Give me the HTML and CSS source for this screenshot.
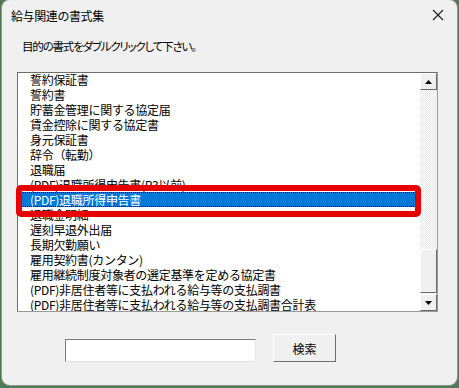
FILE: index.html
```html
<!DOCTYPE html>
<html lang="ja">
<head>
    <meta charset="UTF-8">
    <meta name="viewport" content="width=device-width, initial-scale=1.0">
    <title>給与関連の書式集</title>
    <link rel="stylesheet" href="styles.css">
</head>
<body>
    <div class="window">
        <div class="titlebar">
            <span class="title">給与関連の書式集</span>
            <span class="close">
                <svg width="12" height="12" viewBox="0 0 12 12">
                    <path d="M1 1 L11 11 M11 1 L1 11" stroke="#1a1a1a" stroke-width="1.1" fill="none"/>
                </svg>
            </span>
        </div>

        <p class="prompt">目的の書式をダブルクリックして下さい。</p>

        <div class="listbox">
            <ul class="items">
                <li>誓約保証書</li>
                <li>誓約書</li>
                <li>貯蓄金管理に関する協定届</li>
                <li>賃金控除に関する協定書</li>
                <li>身元保証書</li>
                <li>辞令（転勤）</li>
                <li>退職届</li>
                <li>(PDF)退職所得申告書(R3以前)</li>
                <li class="selected"><span>(PDF)退職所得申告書</span></li>
                <li>退職金明細</li>
                <li>遅刻早退外出届</li>
                <li>長期欠勤願い</li>
                <li>雇用契約書(カンタン)</li>
                <li>雇用継続制度対象者の選定基準を定める協定書</li>
                <li>(PDF)非居住者等に支払われる給与等の支払調書</li>
                <li>(PDF)非居住者等に支払われる給与等の支払調書合計表</li>
            </ul>
            <div class="scrollbar">
                <div class="sb-btn">
                    <svg width="7" height="4" viewBox="0 0 7 4"><path d="M0 4 L3.5 0 L7 4 Z" fill="#000"/></svg>
                </div>
                <div class="sb-track"></div>
                <div class="sb-thumb"></div>
                <div class="sb-track end"></div>
                <div class="sb-btn">
                    <svg width="7" height="4" viewBox="0 0 7 4"><path d="M0 0 L7 0 L3.5 4 Z" fill="#000"/></svg>
                </div>
            </div>
            <div class="callout"></div>
        </div>

        <div class="search-row">
            <input type="text" class="search-box">
            <button class="search-btn">検索</button>
        </div>
    </div>
</body>
</html>
```

FILE: styles.css
```css
* {
    margin: 0;
    padding: 0;
    box-sizing: border-box;
}

body {
    background: #4f7a55;
    font-family: "Noto Sans CJK JP", "Noto Sans", sans-serif;
    height: 388px;
    overflow: hidden;
}

.window {
    margin-left: 2px;
    width: 455px;
    height: 385px;
    background: #f0f0f0;
    border-radius: 8px;
    box-shadow: 0 0 0 1px #8a9a8c;
    display: flex;
    flex-direction: column;
}

.titlebar {
    height: 30px;
    display: flex;
    align-items: center;
    justify-content: space-between;
    padding: 0 12px 0 9px;
    font-size: 12px;
    color: #000;
}

.title {
    letter-spacing: -0.4px;
}

.close {
    display: flex;
    width: 14px;
    justify-content: center;
}

.prompt {
    margin: 8px 0 0 20px;
    font-size: 11.5px;
    line-height: 16px;
    letter-spacing: -1.2px;
    font-feature-settings: "palt";
    color: #000;
}

.listbox {
    position: relative;
    margin: 18px 0 0 15px;
    width: 421px;
    height: 240px;
    background: #fff;
    border: 1px solid #9a9a9a;
    border-top-color: #6e6e6e;
    border-left-color: #6e6e6e;
    display: flex;
}

.items {
    list-style: none;
    flex: 1;
    overflow: hidden;
    margin-top: -1px;
}

.items li {
    height: 15px;
    line-height: 15px;
    font-size: 12px;
    letter-spacing: -0.3px;
    padding-left: 12px;
    white-space: nowrap;
    color: #000;
}

.items li.selected {
    background: #0078d7;
    color: #fff;
    outline: 1px dotted #000;
    outline-offset: -1px;
}

.scrollbar {
    width: 17px;
    display: flex;
    flex-direction: column;
}

.sb-btn {
    height: 17px;
    background: #f0f0f0;
    border: 1px solid;
    border-color: #fff #696969 #696969 #fff;
    display: flex;
    align-items: center;
    justify-content: center;
}

.sb-track {
    height: 159px;
    background: repeating-conic-gradient(#ffffff 0 25%, #e6e6e6 0 50%) 0 0 / 2px 2px;
}

.sb-track.end {
    height: 1px;
}

.sb-thumb {
    height: 44px;
    background: #f0f0f0;
    border: 1px solid;
    border-color: #fff #696969 #696969 #fff;
}

.callout {
    position: absolute;
    left: -2px;
    top: 112px;
    width: 405px;
    height: 32px;
    border: 6px solid #e60000;
    border-radius: 5px;
}

.search-row {
    display: flex;
    align-items: flex-end;
    gap: 17px;
    margin: 22px 0 0 63px;
}

.search-box {
    width: 191px;
    height: 23px;
    background: #fff;
    border: 1px solid;
    border-color: #7a7a7a #e3e3e3 #e3e3e3 #7a7a7a;
    outline: none;
}

.search-btn {
    width: 63px;
    height: 28px;
    background: #f0f0f0;
    border: 1px solid;
    border-color: #fff #6e6e6e #6e6e6e #fff;
    font-family: "Noto Sans CJK JP", sans-serif;
    font-size: 12px;
    color: #000;
}
```
